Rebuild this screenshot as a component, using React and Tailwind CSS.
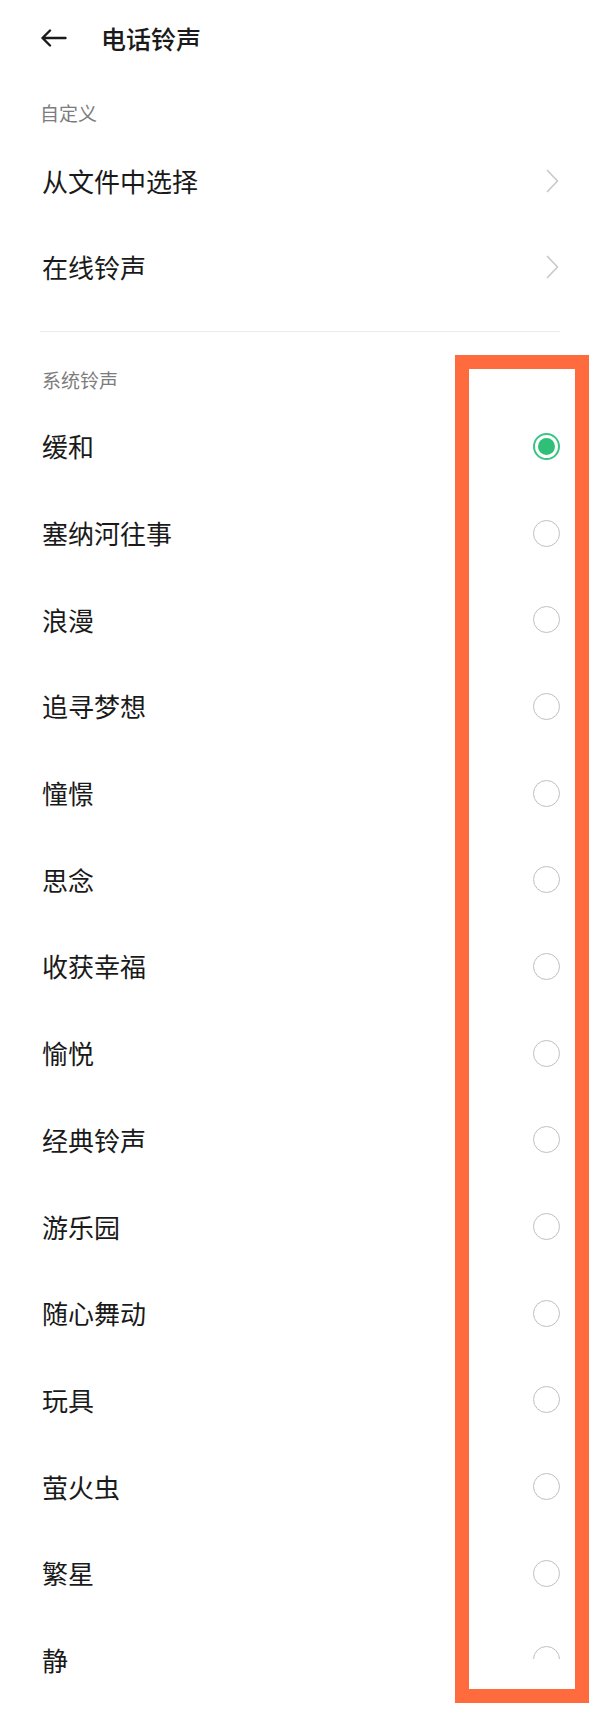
import React from 'react';

const tonos = [
  '缓和',
  '塞纳河往事',
  '浪漫',
  '追寻梦想',
  '憧憬',
  '思念',
  '收获幸福',
  '愉悦',
  '经典铃声',
  '游乐园',
  '随心舞动',
  '玩具',
  '萤火虫',
  '繁星',
  '静',
];

const fuente = { fontFamily: '"Noto Sans CJK SC", "Noto Sans", sans-serif' };

function Flecha() {
  return (
    <svg width="27" height="18" viewBox="0 0 27 18" fill="none">
      <path d="M25.5 9H2.5M10 1.5L2.5 9L10 16.5" stroke="#1a1a1a" strokeWidth="2.4" strokeLinecap="round" strokeLinejoin="round" />
    </svg>
  );
}

function Chevron() {
  return (
    <svg width="15" height="24" viewBox="0 0 15 24" fill="none">
      <path d="M2.5 1.5L12.5 12L2.5 22.5" stroke="#c9c9c9" strokeWidth="1.7" strokeLinecap="round" strokeLinejoin="round" />
    </svg>
  );
}

function Radio({ activo }) {
  if (activo) {
    return (
      <div className="w-[27px] h-[27px] rounded-full border-2 border-[#3cc483] flex items-center justify-center">
        <div className="w-[17px] h-[17px] rounded-full bg-[#2fbf77]" />
      </div>
    );
  }
  return <div className="w-[27px] h-[27px] rounded-full border-[1.5px] border-[#bfbfbf]" />;
}

export default function App() {
  return (
    <div className="relative w-[600px] h-[1724px] overflow-hidden bg-white text-[#1a1a1a]" style={fuente}>
      {/* cabecera */}
      <div className="h-[76px] flex items-center pl-[40px] gap-[34px]">
        <Flecha />
        <span className="text-[25px] font-medium leading-none">电话铃声</span>
      </div>

      <div className="px-[40px]">
        <div className="h-[62px] pt-[10px] flex items-center text-[19px] text-[#7d7d7d] leading-none">自定义</div>

        <div className="h-[86px] flex items-center justify-between">
          <span className="text-[26px] leading-none pl-[2px]">从文件中选择</span>
          <Chevron />
        </div>
        <div className="h-[86px] flex items-center justify-between">
          <span className="text-[26px] leading-none pl-[2px]">在线铃声</span>
          <Chevron />
        </div>

        <div className="mt-[21px] h-px bg-[#ebebeb]" />

        <div className="h-[71px] pt-[24px] flex items-center text-[19px] text-[#7d7d7d] leading-none pl-[2px]">系统铃声</div>

        {tonos.map((t, i) => {
          const ultimo = i === tonos.length - 1;
          return (
            <div key={t} className="h-[86.7px] flex items-center justify-between">
              <span className="text-[26px] leading-none pl-[2px]">{t}</span>
              {ultimo ? (
                <div className="self-start mt-[29px] h-[13px] overflow-hidden">
                  <Radio activo={false} />
                </div>
              ) : (
                <Radio activo={i === 0} />
              )}
            </div>
          );
        })}
      </div>

      {/* marco de anotación */}
      <div className="absolute left-[455px] top-[355px] w-[134px] h-[1348px] border-[14px] border-[#ff6b3d]" />
    </div>
  );
}
